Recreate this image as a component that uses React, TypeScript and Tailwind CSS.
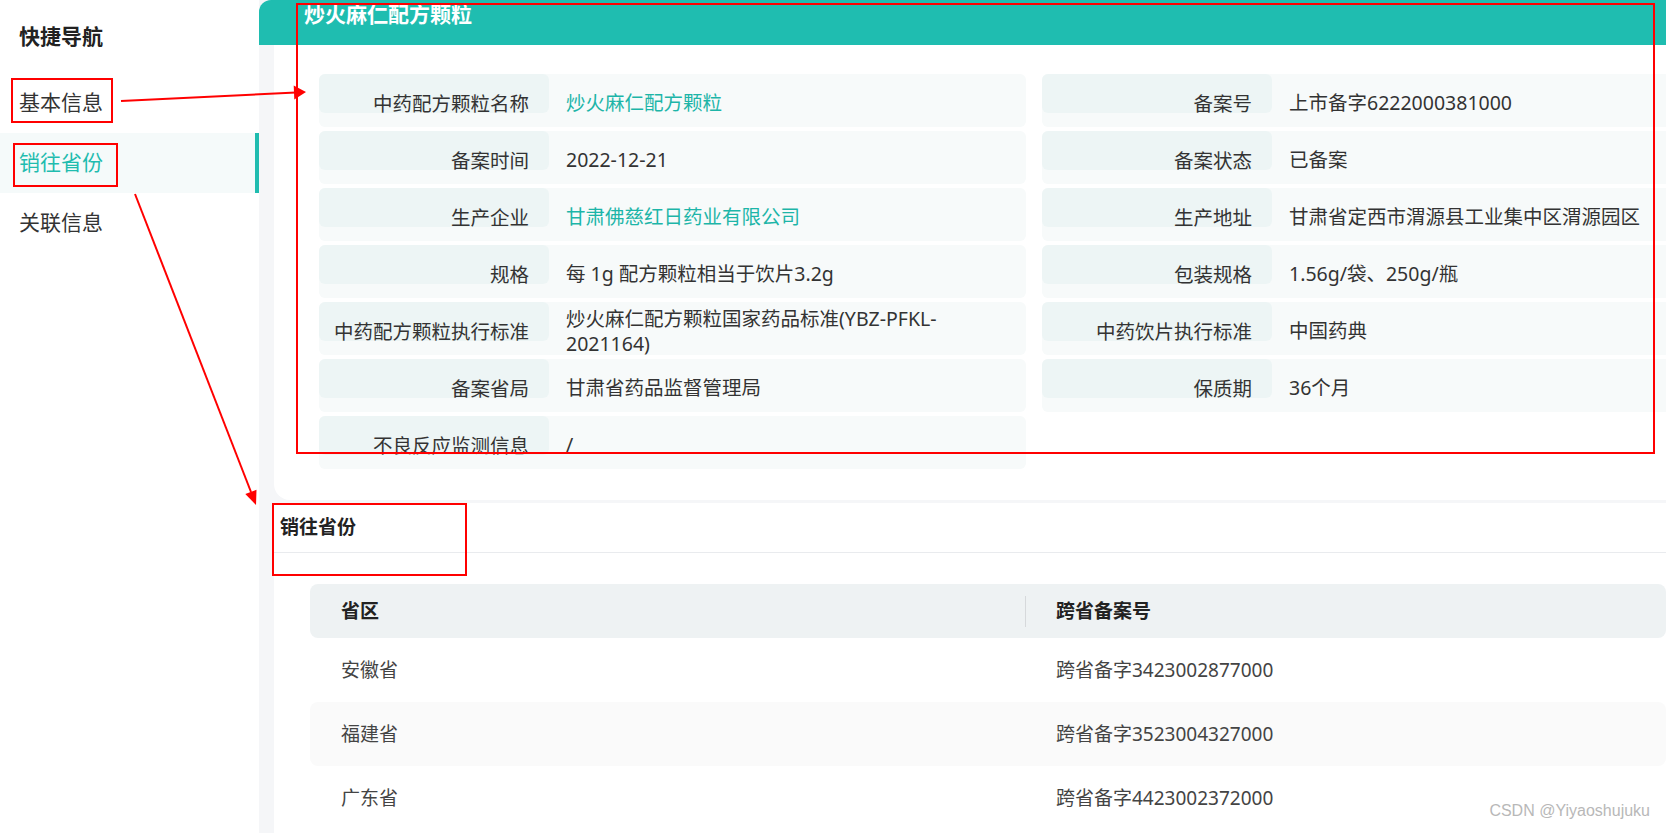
import React from "react";

type Field = { label: string; value: string; link?: boolean };

const leftFields: Field[] = [
  { label: "中药配方颗粒名称", value: "炒火麻仁配方颗粒", link: true },
  { label: "备案时间", value: "2022-12-21" },
  { label: "生产企业", value: "甘肃佛慈红日药业有限公司", link: true },
  { label: "规格", value: "每 1g 配方颗粒相当于饮片3.2g" },
  { label: "中药配方颗粒执行标准", value: "炒火麻仁配方颗粒国家药品标准(YBZ-PFKL-2021164)" },
  { label: "备案省局", value: "甘肃省药品监督管理局" },
  { label: "不良反应监测信息", value: "/" },
];

const rightFields: Field[] = [
  { label: "备案号", value: "上市备字6222000381000" },
  { label: "备案状态", value: "已备案" },
  { label: "生产地址", value: "甘肃省定西市渭源县工业集中区渭源园区" },
  { label: "包装规格", value: "1.56g/袋、250g/瓶" },
  { label: "中药饮片执行标准", value: "中国药典" },
  { label: "保质期", value: "36个月" },
];

const provinces = [
  { name: "安徽省", code: "跨省备字3423002877000" },
  { name: "福建省", code: "跨省备字3523004327000" },
  { name: "广东省", code: "跨省备字4423002372000" },
];

const navItems = ["基本信息", "销往省份", "关联信息"];

function InfoRow({ field }: { field: Field }) {
  return (
    <div className="flex h-[53px] rounded-md bg-[#f7fafa]">
      <div className="h-[39px] w-[230px] shrink-0 rounded-md bg-[#edf5f5] pr-[20px] pt-[17px] text-right leading-[25px] whitespace-nowrap">
        {field.label}
      </div>
      <div
        className={`flex items-center pt-[4px] pl-[17px] pr-[22px] leading-[25px] ${
          field.link ? "text-[#1db5a8]" : ""
        }`}
      >
        {field.value}
      </div>
    </div>
  );
}

export default function App() {
  return (
    <div
      className="relative flex h-[833px] w-[1666px] overflow-hidden bg-[#f5f6f8] text-[#333]"
      style={{ fontFamily: '"Noto Sans", "Noto Sans CJK SC", sans-serif' }}
    >
      {/* sidebar */}
      <aside className="w-[259px] shrink-0 bg-white text-[21px]">
        <div className="flex h-[73px] items-center pl-[19px] font-bold text-[#222]">
          快捷导航
        </div>
        {navItems.map((item) => {
          const active = item === "销往省份";
          return (
            <div
              key={item}
              className={`flex h-[60px] items-center border-r-4 pl-[19px] ${
                active
                  ? "border-[#1fbcaf] bg-[#f5fafa] text-[#1fbcaf]"
                  : "border-transparent"
              }`}
            >
              {item}
            </div>
          );
        })}
      </aside>

      {/* main */}
      <main className="flex min-w-0 flex-1 flex-col">
        <div className="h-[45px] shrink-0 rounded-tl-[12px] bg-[#1fbdb0] pl-[45px] text-[21px] font-bold leading-[28px] text-white">
          炒火麻仁配方颗粒
        </div>

        <div className="flex flex-1 flex-col gap-[3px] pl-[15px]">
          <section className="overflow-hidden rounded-bl-[16px] bg-white pb-[31px] pl-[45px] pt-[29px] text-[19.5px]">
            <div className="grid grid-cols-[707px_707px] gap-x-[16px] gap-y-[4px]">
              {leftFields.map((f, i) => (
                <React.Fragment key={f.label}>
                  <InfoRow field={f} />
                  {rightFields[i] ? <InfoRow field={rightFields[i]} /> : <div />}
                </React.Fragment>
              ))}
            </div>
          </section>

          <section className="flex-1 overflow-hidden bg-white">
            <div className="flex h-[50px] items-center border-b border-[#e9ebee] pl-[6px] text-[19px] font-bold text-[#222]">
              销往省份
            </div>
            <div className="ml-[36px] mt-[31px] text-[19px] text-[#444]">
              <div className="flex h-[54px] items-center rounded-lg bg-[#eef2f3] font-bold text-[#222]">
                <div className="w-[715px] shrink-0 pl-[31px]">省区</div>
                <div className="h-[31px] w-px bg-[#d6d9db]" />
                <div className="pl-[30px]">跨省备案号</div>
              </div>
              {provinces.map((p, i) => (
                <div
                  key={p.name}
                  className={`flex h-[64px] items-center rounded-lg ${
                    i % 2 === 1 ? "bg-[#fafafa]" : ""
                  }`}
                >
                  <div className="w-[716px] shrink-0 pl-[31px]">{p.name}</div>
                  <div className="pl-[30px]">{p.code}</div>
                </div>
              ))}
            </div>
          </section>
        </div>
      </main>

      {/* watermark */}
      <div
        className="absolute bottom-[10px] right-[16px] text-[16px] text-[#b8b8b8]"
        style={{ fontFamily: '"Liberation Sans", sans-serif' }}
      >
        CSDN @Yiyaoshujuku
      </div>

      {/* red annotations */}
      <svg
        className="pointer-events-none absolute left-0 top-0"
        width="1666"
        height="833"
        viewBox="0 0 1666 833"
      >
        <g fill="none" stroke="#ff0000" strokeWidth="2">
          <rect x="297" y="4" width="1357" height="449" />
          <rect x="12" y="79" width="100" height="43" />
          <rect x="14" y="144" width="103" height="42" />
          <rect x="273" y="504" width="193" height="71" />
          <line x1="121" y1="101" x2="296" y2="92.5" />
          <line x1="135" y1="194" x2="251" y2="492" />
        </g>
        <g fill="#ff0000">
          <polygon points="306,92 294.3,99.6 293.7,85.6" />
          <polygon points="256,505 245.3,494.1 256.5,489.7" />
        </g>
      </svg>
    </div>
  );
}
